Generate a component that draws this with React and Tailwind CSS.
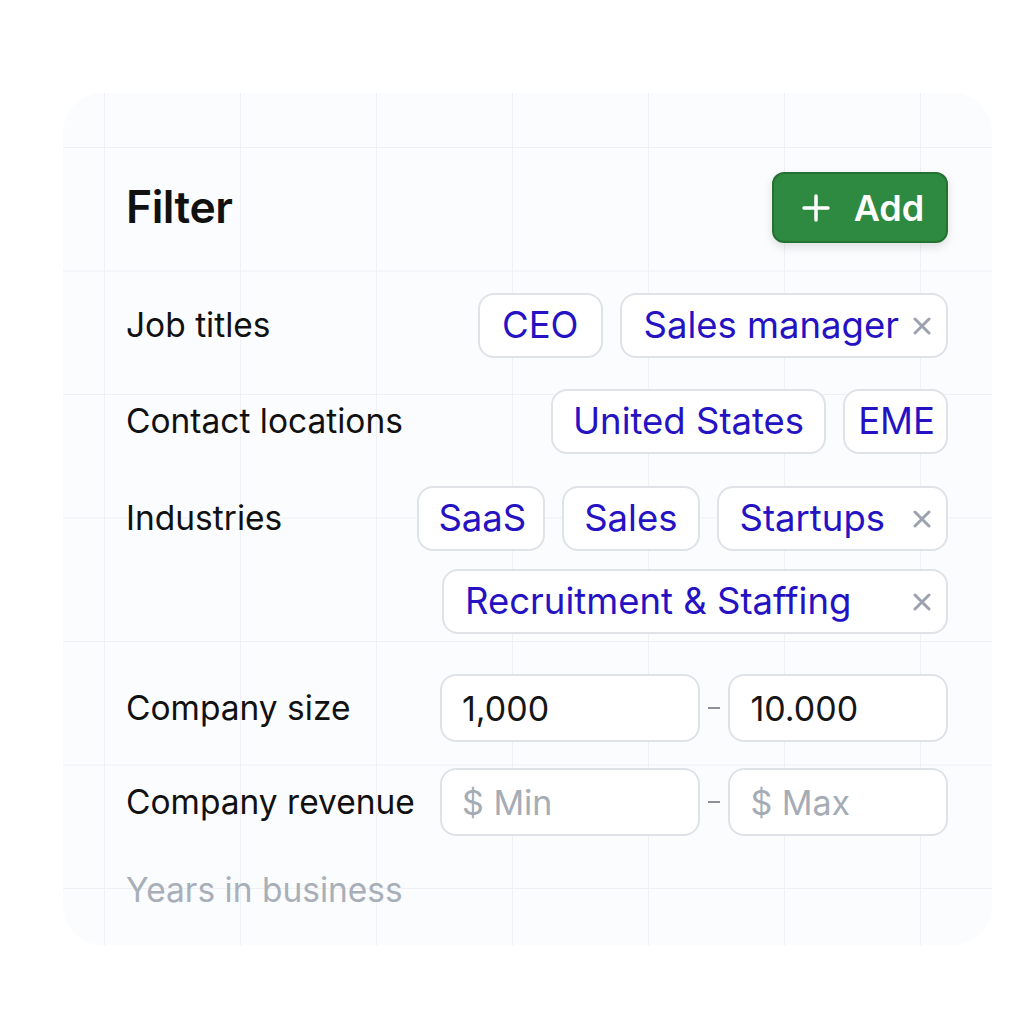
import React from "react";

const font = { fontFamily: "Inter, 'Noto Sans', sans-serif" };

const XIcon = () => (
  <svg width="18" height="18" viewBox="0 0 18 18" className="shrink-0">
    <path d="M2 2 L16 16 M16 2 L2 16" stroke="#9ca3af" strokeWidth="3" strokeLinecap="round" />
  </svg>
);

const Chip = ({ label, removable, className = "" }) => (
  <div
    className={
      "h-[65px] flex items-center rounded-[16px] border-2 border-[#dfe2e7] bg-white text-[36.5px] text-[#2512c2] " +
      className
    }
  >
    <span className="leading-none whitespace-nowrap">{label}</span>
    {removable && <XIcon />}
  </div>
);

const Label = ({ children, className = "w-[314px]" }) => (
  <div className={"h-[65px] shrink-0 flex items-center text-[33.5px] text-[#111111] " + className}>
    {children}
  </div>
);

const Input = ({ value, placeholder, className = "" }) => (
  <div
    className={
      "h-[68px] flex items-center rounded-[16px] border-2 border-[#dfe2e7] bg-white pl-[20px] text-[34px] " +
      className
    }
  >
    {value ? (
      <span className="text-[#161616]">{value}</span>
    ) : (
      <span className="text-[#a6acb6]">{placeholder}</span>
    )}
  </div>
);

const Dash = () => (
  <div className="w-[28px] flex justify-center">
    <div className="w-[12px] h-[2px] bg-[#8b9099]" />
  </div>
);

export default function App() {
  return (
    <div className="min-h-screen bg-white pt-[93px] pl-[63px]" style={font}>
      <div className="w-[929px] h-[852px] rounded-[40px] bg-[#fbfcfe] bg-[linear-gradient(to_right,#eef0f4_1px,transparent_1px),linear-gradient(to_bottom,#eef0f4_1px,transparent_1px)] bg-[size:136px_123.5px] bg-[position:41px_54px] pt-[79px] pl-[63px] pr-[44px]">
        <div className="flex items-center justify-between h-[71px]">
          <h1 className="text-[44.5px] font-semibold text-[#111111] tracking-[-0.5px]">Filter</h1>
          <button className="w-[176px] h-[71px] rounded-[12px] bg-[#2e8a40] border-2 border-[#237233] shadow-[0_4px_10px_rgba(0,0,0,0.12)] flex items-center justify-center gap-[24px] pl-[6px] text-white text-[36px] font-semibold">
            <svg width="28" height="28" viewBox="0 0 28 28">
              <path d="M14 2 V26 M2 14 H26" stroke="white" strokeWidth="3.5" strokeLinecap="round" />
            </svg>
            <span className="leading-none">Add</span>
          </button>
        </div>

        <div className="flex mt-[50px]">
          <Label>Job titles</Label>
          <div className="flex-1 flex flex-wrap justify-end gap-x-[17px] gap-y-[20px]">
            <Chip label="CEO" className="px-[22px]" />
            <Chip label="Sales manager" removable className="pl-[22px] pr-[15px] gap-[14px]" />
          </div>
        </div>

        <div className="flex mt-[31px]">
          <Label>Contact locations</Label>
          <div className="flex-1 flex flex-wrap justify-end gap-x-[17px] gap-y-[20px]">
            <Chip label="United States" className="px-[20px]" />
            <Chip label="EME" className="pl-[13px] pr-[11px]" />
          </div>
        </div>

        <div className="flex mt-[32px]">
          <Label className="w-[250px]">Industries</Label>
          <div className="flex-1 flex flex-wrap justify-end gap-x-[17px] gap-y-[18px]">
            <Chip label="SaaS" className="pl-[19px] pr-[17px]" />
            <Chip label="Sales" className="px-[20px]" />
            <Chip label="Startups" removable className="pl-[21px] pr-[15px] gap-[28px]" />
            <Chip label="Recruitment & Staffing" removable className="w-[506px] justify-between pl-[21px] pr-[15px]" />
          </div>
        </div>

        <div className="flex items-center mt-[40px]">
          <div className="w-[314px] shrink-0 text-[33.5px] text-[#111111]">Company size</div>
          <Input value="1,000" className="w-[261px]" />
          <Dash />
          <Input value="10.000" className="w-[220px]" />
        </div>

        <div className="flex items-center mt-[26px]">
          <div className="w-[314px] shrink-0 text-[33.5px] text-[#111111]">Company revenue</div>
          <Input placeholder="$ Min" className="w-[261px]" />
          <Dash />
          <Input placeholder="$ Max" className="w-[220px]" />
        </div>

        <div className="mt-[29px] text-[33.5px] text-[#a9afb8]">Years in business</div>
      </div>
    </div>
  );
}
